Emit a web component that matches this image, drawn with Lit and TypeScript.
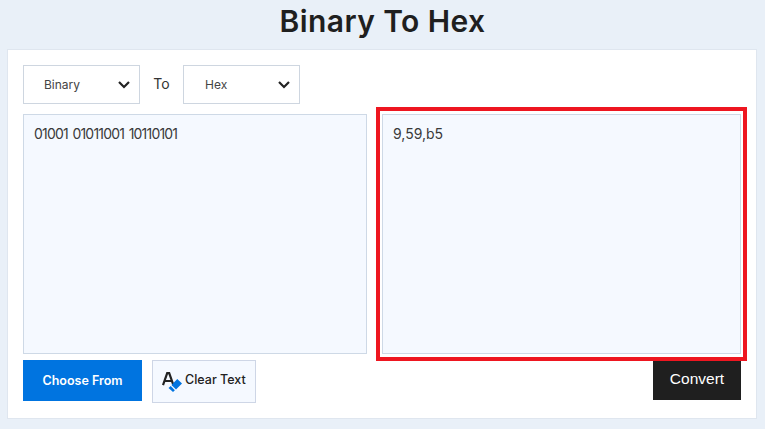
import { LitElement, html, css } from "lit";
import { customElement } from "lit/decorators.js";

@customElement("app-root")
export class AppRoot extends LitElement {
  static styles = css`
    :host { display: block; width: 765px; height: 429px; background: #e9f0f8; overflow: hidden; font-family: "Inter", "Noto Sans", sans-serif; color: #222; }
    h1 { margin: 0; height: 49px; box-sizing: border-box; padding-top: 3px; text-align: center; font-size: 30px; line-height: 36px; font-weight: 600; color: #1f1f1f; letter-spacing: 0.4px; }
    .card { margin: 0 7px; width: 750px; height: 370px; box-sizing: border-box; background: #fff; border: 1px solid #dfe6ef; padding: 15px; display: flex; flex-direction: column; }
    .selects { display: flex; align-items: center; height: 39px; }
    .select { width: 117px; height: 39px; box-sizing: border-box; border: 1px solid #ced6e0; display: flex; align-items: center; justify-content: space-between; font-size: 12px; color: #444; background: #fff; padding-bottom: 1px; }
    .select.first { padding-left: 20px; padding-right: 9px; }
    .select.second { padding-left: 21px; padding-right: 9px; }
    .select svg { margin-top: 1px; }
    .to { width: 43px; text-align: center; font-size: 14px; color: #333; padding-bottom: 2px; box-sizing: border-box; }
    .areas { display: flex; gap: 15px; margin-top: 10px; }
    .area { height: 240px; box-sizing: border-box; background: #f5f9ff; border: 1px solid #ced9e6; padding: 10px; font-size: 14px; line-height: 18px; color: #3a3a3a; }
    .left { width: 344px; letter-spacing: -0.8px; word-spacing: 1.4px; }
    .right { width: 359px; position: relative; }
    .mark { position: absolute; left: -7px; top: -8px; width: 371px; height: 254px; box-sizing: border-box; border: 4px solid #ee1620; pointer-events: none; }
    .actions { display: flex; align-items: flex-start; margin-top: 6px; }
    .choose { width: 119px; height: 41px; display: flex; align-items: center; justify-content: center; background: #0074e0; color: #fff; font-size: 12.5px; font-weight: 600; }
    .clear { margin-left: 10px; width: 104px; height: 43px; box-sizing: border-box; background: #f5f9ff; border: 1px solid #ced6e6; display: flex; align-items: center; padding-left: 9px; padding-bottom: 2px; gap: 2px; font-size: 12.5px; font-weight: 500; color: #222; }
    .clear span { margin-top: -2px; }
    .convert { margin-left: auto; margin-top: 1px; width: 88px; height: 39px; padding-bottom: 3px; box-sizing: border-box; display: flex; align-items: center; justify-content: center; background: #1f1f1f; color: #fff; font-family: "Liberation Sans", sans-serif; font-size: 15.5px; }
    svg { display: block; }
  `;

  private chevron() {
    return html`<svg width="12" height="8" viewBox="0 0 12 8"><path d="M1 1l5 5 5-5" fill="none" stroke="#222" stroke-width="2.2"/></svg>`;
  }

  render() {
    return html`
      <h1>Binary To Hex</h1>
      <div class="card">
        <div class="selects">
          <div class="select first"><span>Binary</span>${this.chevron()}</div>
          <div class="to">To</div>
          <div class="select second"><span>Hex</span>${this.chevron()}</div>
        </div>
        <div class="areas">
          <div class="area left">01001 01011001 10110101</div>
          <div class="area right">9,59,b5<div class="mark"></div></div>
        </div>
        <div class="actions">
          <div class="choose">Choose From</div>
          <div class="clear">
            <svg width="21" height="22" viewBox="0 0 21 22">
              <path d="M1 15.200 5.200 3.200h2L11.400 15.200M2.800 11h6.800" fill="none" stroke="#222" stroke-width="2.200"/>
              <path d="M15.300 9 20 13.500 14 19.500 9.500 15Z" fill="#0074e0"/>
              <path d="M8.700 16 12.900 20.300 11 22 6.500 18Z" fill="#0074e0"/>
            </svg>
            <span>Clear Text</span>
          </div>
          <div class="convert">Convert</div>
        </div>
      </div>
    `;
  }
}
